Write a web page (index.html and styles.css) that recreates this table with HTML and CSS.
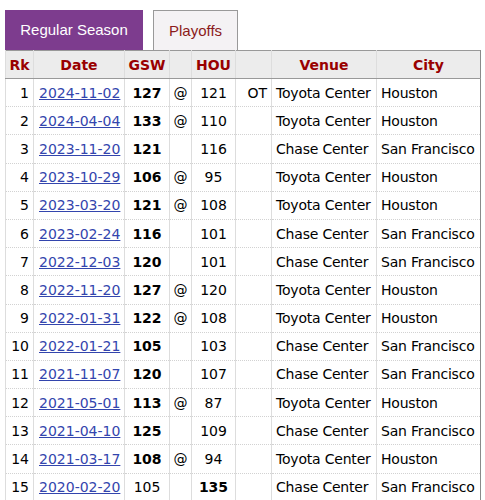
FILE: index.html
```html
<!DOCTYPE html>
<html>
<head>
<meta charset="utf-8">
<link rel="stylesheet" href="styles.css">
</head>
<body>
<div class="page">
  <div class="tabs">
    <div class="tab tab-active">Regular Season</div>
    <div class="tab tab-idle">Playoffs</div>
  </div>
  <table class="games">
    <colgroup>
      <col class="c-rk"><col class="c-date"><col class="c-gsw"><col class="c-at"><col class="c-hou"><col class="c-ot"><col class="c-venue"><col class="c-city">
    </colgroup>
    <thead>
      <tr><th>Rk</th><th>Date</th><th>GSW</th><th></th><th>HOU</th><th></th><th>Venue</th><th>City</th></tr>
    </thead>
    <tbody>
      <tr><td class="r">1</td><td class="d"><a href="#">2024-11-02</a></td><td class="c b">127</td><td class="c">@</td><td class="c">121</td><td class="r">OT</td><td class="t">Toyota Center</td><td class="t">Houston</td></tr>
      <tr><td class="r">2</td><td class="d"><a href="#">2024-04-04</a></td><td class="c b">133</td><td class="c">@</td><td class="c">110</td><td class="r"></td><td class="t">Toyota Center</td><td class="t">Houston</td></tr>
      <tr><td class="r">3</td><td class="d"><a href="#">2023-11-20</a></td><td class="c b">121</td><td class="c"></td><td class="c">116</td><td class="r"></td><td class="t">Chase Center</td><td class="t">San Francisco</td></tr>
      <tr><td class="r">4</td><td class="d"><a href="#">2023-10-29</a></td><td class="c b">106</td><td class="c">@</td><td class="c">95</td><td class="r"></td><td class="t">Toyota Center</td><td class="t">Houston</td></tr>
      <tr><td class="r">5</td><td class="d"><a href="#">2023-03-20</a></td><td class="c b">121</td><td class="c">@</td><td class="c">108</td><td class="r"></td><td class="t">Toyota Center</td><td class="t">Houston</td></tr>
      <tr><td class="r">6</td><td class="d"><a href="#">2023-02-24</a></td><td class="c b">116</td><td class="c"></td><td class="c">101</td><td class="r"></td><td class="t">Chase Center</td><td class="t">San Francisco</td></tr>
      <tr><td class="r">7</td><td class="d"><a href="#">2022-12-03</a></td><td class="c b">120</td><td class="c"></td><td class="c">101</td><td class="r"></td><td class="t">Chase Center</td><td class="t">San Francisco</td></tr>
      <tr><td class="r">8</td><td class="d"><a href="#">2022-11-20</a></td><td class="c b">127</td><td class="c">@</td><td class="c">120</td><td class="r"></td><td class="t">Toyota Center</td><td class="t">Houston</td></tr>
      <tr><td class="r">9</td><td class="d"><a href="#">2022-01-31</a></td><td class="c b">122</td><td class="c">@</td><td class="c">108</td><td class="r"></td><td class="t">Toyota Center</td><td class="t">Houston</td></tr>
      <tr><td class="r">10</td><td class="d"><a href="#">2022-01-21</a></td><td class="c b">105</td><td class="c"></td><td class="c">103</td><td class="r"></td><td class="t">Chase Center</td><td class="t">San Francisco</td></tr>
      <tr><td class="r">11</td><td class="d"><a href="#">2021-11-07</a></td><td class="c b">120</td><td class="c"></td><td class="c">107</td><td class="r"></td><td class="t">Chase Center</td><td class="t">San Francisco</td></tr>
      <tr><td class="r">12</td><td class="d"><a href="#">2021-05-01</a></td><td class="c b">113</td><td class="c">@</td><td class="c">87</td><td class="r"></td><td class="t">Toyota Center</td><td class="t">Houston</td></tr>
      <tr><td class="r">13</td><td class="d"><a href="#">2021-04-10</a></td><td class="c b">125</td><td class="c"></td><td class="c">109</td><td class="r"></td><td class="t">Chase Center</td><td class="t">San Francisco</td></tr>
      <tr><td class="r">14</td><td class="d"><a href="#">2021-03-17</a></td><td class="c b">108</td><td class="c">@</td><td class="c">94</td><td class="r"></td><td class="t">Toyota Center</td><td class="t">Houston</td></tr>
      <tr><td class="r">15</td><td class="d"><a href="#">2020-02-20</a></td><td class="c">105</td><td class="c"></td><td class="c b">135</td><td class="r"></td><td class="t">Chase Center</td><td class="t">San Francisco</td></tr>
    </tbody>
  </table>
</div>
</body>
</html>
```
FILE: styles.css
```css
html, body {
  margin: 0;
  padding: 0;
  background: #ffffff;
  overflow: hidden;
}
.page {
  padding: 10px 5px 0 5px;
}
.tabs {
  display: flex;
  gap: 10px;
  align-items: flex-end;
}
.tab {
  height: 40px;
  line-height: 40px;
  box-sizing: border-box;
  font-family: "Liberation Sans", Arial, sans-serif;
  font-size: 15px;
  padding: 0 15px;
}
.tab-active {
  background: #7d3c8e;
  color: #ffffff;
  width: 138px;
  text-align: center;
}
.tab-idle {
  background: #f4f2f4;
  color: #8b1a1a;
  border: 1px solid #999999;
  border-bottom: none;
  width: 85px;
  text-align: center;
  line-height: 39px;
}
.games {
  width: 475px;
  table-layout: fixed;
  border-collapse: collapse;
  font-family: "DejaVu Sans", Verdana, sans-serif;
  font-size: 14px;
  color: #000000;
  border-left: 1px solid #8a8a8a;
  border-right: 1px solid #8a8a8a;
  border-top: 1px solid #999999;
}
.c-rk { width: 28px; }
.c-date { width: 91px; }
.c-gsw { width: 45px; }
.c-at { width: 22px; }
.c-hou { width: 44px; }
.c-ot { width: 36px; }
.c-venue { width: 105px; }
.c-city { width: 104px; }
.games th {
  background: #ececec;
  color: #990000;
  font-weight: bold;
  text-align: center;
  height: 27px;
  padding: 0 3px;
  border-left: 1px solid #dddddd;
  border-bottom: 1px solid #999999;
  white-space: nowrap;
  overflow: hidden;
}
.games td {
  height: 27.2px;
  padding: 0 1px 0 4px;
  border-left: 1px solid #dddddd;
  border-bottom: 1px dotted #d2d2d2;
  white-space: nowrap;
  overflow: hidden;
  text-align: left;
}
.games td.d { padding-left: 5px; }
.games td.t { letter-spacing: -0.2px; padding-left: 4px; padding-right: 0; }
.games td.r { text-align: right; padding-right: 4px; padding-left: 2px; }
.games td.c { text-align: center; padding: 0 2px; }
.games td.b { font-weight: bold; }
.games a {
  color: #3345ad;
  text-decoration: underline;
}
```
